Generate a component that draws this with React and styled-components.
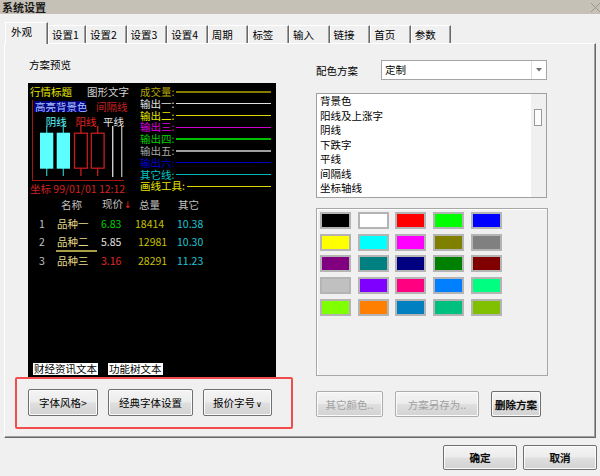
import React from 'react';
import styled, { createGlobalStyle } from 'styled-components';

const GlobalStyle = createGlobalStyle`
  html, body {
    margin: 0;
    padding: 0;
    background: #f0f0f0;
  }
  body {
    font-family: "Noto Sans CJK SC", "Liberation Sans", sans-serif;
    font-size: 10.5px;
    color: #000;
  }
`;

const Window = styled.div`
  width: 600px;
  height: 476px;
  display: flex;
  flex-direction: column;
  background: #f0f0f0;
  overflow: hidden;
`;

const TitleBar = styled.div`
  height: 14px;
  background: #c6c1b7;
  display: flex;
  align-items: center;
  justify-content: space-between;
  padding: 0 0 0 2px;
  font-size: 11px;
  font-weight: bold;
  color: #1a1a1a;
`;

const TabStrip = styled.div`
  display: flex;
  align-items: flex-end;
  height: 21px;
  margin: 8px 0 0 5px;
  position: relative;
  z-index: 1;
`;

const Tab = styled.div`
  box-sizing: border-box;
  flex: none;
  width: ${(p) => p.$w}px;
  height: ${(p) => (p.$active ? 22 : 18)}px;
  margin-bottom: ${(p) => (p.$active ? -1 : 0)}px;
  padding-left: ${(p) => (p.$active ? 5 : 3)}px;
  line-height: ${(p) => (p.$active ? 18 : 17)}px;
  background: #f0f0f0;
  border-top: 1px solid #fff;
  border-left: 1px solid #fff;
  border-right: 1px solid #696969;
  box-shadow: inset -1px 0 0 #a0a0a0;
  white-space: nowrap;
`;

const Panel = styled.div`
  box-sizing: border-box;
  width: 592px;
  height: 395px;
  margin: 0 4px;
  border: 1px solid;
  border-color: #fff #696969 #696969 #fff;
  box-shadow: inset -1px -1px 0 #a0a0a0;
  display: flex;
  padding-left: 10px;
`;

const LeftCol = styled.div`
  width: 278px;
  display: flex;
  flex-direction: column;
`;

const SectionLabel = styled.div`
  margin: 15px 0 0 14px;
  height: 12px;
  line-height: 12px;
`;

const Preview = styled.div`
  box-sizing: border-box;
  width: 248px;
  height: 294px;
  margin: 12px 0 0 13px;
  padding-top: 3px;
  background: #000;
  display: flex;
  flex-direction: column;
  line-height: 12px;
`;

const PreviewTop = styled.div`
  display: flex;
  height: 109px;
`;

const ChartCol = styled.div`
  box-sizing: border-box;
  width: 112px;
  padding-left: 2px;
`;

const Colored = styled.span`
  color: ${(p) => p.$c};
  display: inline-block;
  width: ${(p) => (p.$w ? `${p.$w}px` : 'auto')};
  margin-left: ${(p) => p.$ml || 0}px;
  white-space: nowrap;
`;

const ChartTitleRow = styled.div`
  display: flex;
  height: 12px;
`;

const Frame = styled.div`
  box-sizing: border-box;
  width: 92px;
  height: 81px;
  margin: 2px 0 0 2px;
  border-left: 1px solid #a41616;
  border-bottom: 1px solid #a41616;
  display: flex;
  flex-direction: column;
`;

const FrameRowA = styled.div`
  display: flex;
  height: 11px;
  margin-top: 1px;
  line-height: 11px;
`;

const HiBg = styled.span`
  box-sizing: border-box;
  width: 52px;
  margin-left: 1px;
  padding-left: 1px;
  background: #000080;
  color: #a8c0ff;
  white-space: nowrap;
`;

const FrameRowB = styled.div`
  display: flex;
  height: 10px;
  margin-top: 4px;
  padding-left: 12.7px;
  line-height: 12px;
`;

const Coord = styled.div`
  margin-top: 2px;
  height: 12px;
  color: #d42020;
  white-space: nowrap;
`;

const Legend = styled.div`
  flex: 1;
  padding-right: 5px;
  display: flex;
  flex-direction: column;
`;

const LegendRow = styled.div`
  display: flex;
  align-items: center;
  height: 11.8px;
  line-height: 11.8px;
  color: ${(p) => p.$c};
  white-space: nowrap;
`;

const LegendLine = styled.div`
  flex: 1;
  height: 1.5px;
  margin-left: 2px;
  background: ${(p) => p.$c};
`;

const Table = styled.div`
  display: grid;
  grid-template-columns: 18px 44px 34px 42px 1fr;
  grid-auto-rows: 18.8px;
  align-items: center;
  padding-left: 11px;
  margin-top: 0.5px;
`;

const Cell = styled.div`
  position: relative;
  color: ${(p) => p.$c || '#c0c0c0'};
  padding-left: ${(p) => p.$pl || 0}px;
  white-space: nowrap;

  ${(p) =>
    p.$underline &&
    `
    &::after {
      content: '';
      position: absolute;
      left: -1px;
      top: 14px;
      width: 41px;
      height: 2px;
      background: #a89c48;
    }
  `}
`;

const Arrow = styled.span`
  color: #ff2020;
  font-family: "DejaVu Sans", sans-serif;
  font-size: 9px;
  margin-left: 1px;
`;

const TextTags = styled.div`
  margin-top: auto;
  padding: 0 0 2px 5px;
  display: flex;
  gap: 10px;
`;

const TextTag = styled.span`
  background: #fff;
  color: #000;
  height: 12px;
  line-height: 12px;
  padding: 0 1px;
`;

const RedBox = styled.div`
  box-sizing: border-box;
  width: 278px;
  height: 52px;
  border: 2px solid #f24c4c;
  border-radius: 2px;
  display: flex;
  gap: 10px;
  padding: 10px 0 0 11px;
`;

const Button = styled.button`
  box-sizing: border-box;
  flex: none;
  width: ${(p) => p.$w}px;
  height: ${(p) => p.$h || 26}px;
  padding: 0;
  font: inherit;
  color: ${(p) => (p.disabled ? '#a0a0a0' : '#000')};
  -webkit-text-stroke: ${(p) => (p.$strong ? '0.35px #000' : '0')};
  border: 1px solid ${(p) => (p.disabled ? '#adadad' : '#707070')};
  border-radius: 2px;
  background: linear-gradient(#f4f4f4, #ececec 48%, #dfdfdf 52%, #d2d2d2);
  box-shadow: inset 0 0 0 1px #fbfbfb;
  white-space: nowrap;
`;

const SmallV = styled.span`
  font-family: "DejaVu Sans", sans-serif;
  font-size: 8px;
  margin-left: 1px;
`;

const RightCol = styled.div`
  width: 235px;
  margin-left: 23px;
  display: flex;
  flex-direction: column;
`;

const SelectRow = styled.div`
  display: flex;
  align-items: center;
  height: 20px;
  margin-top: 16px;
`;

const FieldLabel = styled.div`
  width: 65px;
`;

const Select = styled.div`
  box-sizing: border-box;
  width: 166px;
  height: 20px;
  border: 1px solid #a5a5a5;
  background: #fff;
  display: flex;
`;

const SelectText = styled.div`
  flex: 1;
  padding-left: 3px;
  line-height: 18px;
`;

const SelectButton = styled.div`
  width: 14px;
  border-left: 1px solid #dcdcdc;
  display: flex;
  align-items: center;
  justify-content: center;
`;

const ListBox = styled.div`
  box-sizing: border-box;
  width: 231px;
  height: 105px;
  margin-top: 13px;
  border: 1px solid #a0a0a0;
  background: #fff;
  display: flex;
`;

const ListItems = styled.div`
  flex: 1;
  padding-left: 3px;
  line-height: 14.5px;
`;

const ScrollTrack = styled.div`
  width: 15px;
  background: #f0f0f0;
  display: flex;
  flex-direction: column;
  align-items: center;
`;

const Thumb = styled.div`
  box-sizing: border-box;
  width: 8px;
  height: 17px;
  margin: 15px 1px 0 0;
  border: 1px solid #9a9a9a;
  background: #fbfbfb;
`;

const ColorPanel = styled.div`
  box-sizing: border-box;
  width: 232px;
  height: 168px;
  margin-top: 10px;
  padding: 3px 0 0 3px;
  border: 1px solid #a8a8a8;
  box-shadow: inset 1px 1px 0 #fff;
  display: grid;
  grid-template-columns: repeat(5, 31px);
  grid-auto-rows: 17px;
  column-gap: 6.7px;
  row-gap: 4.7px;
  align-content: start;
`;

const Swatch = styled.div`
  box-sizing: border-box;
  border: 2px solid #b4b4b4;
  background: ${(p) => p.$c};
`;

const ButtonRow = styled.div`
  display: flex;
  gap: 12px;
  margin-top: 15px;
`;

const Footer = styled.div`
  display: flex;
  justify-content: flex-end;
  gap: 6px;
  padding: 7px 3px 0 0;
`;

const tabs = ['外观', '设置1', '设置2', '设置3', '设置4', '周期', '标签', '输入', '链接', '首页', '参数'];

const legend = [
  ['成交量', '#b4a400', '#857c00'],
  ['输出一', '#e0e0e0', '#e0e0e0'],
  ['输出二', '#e6e600', '#d8d800'],
  ['输出三', '#e000e0', '#d000d0'],
  ['输出四', '#00d000', '#00c000'],
  ['输出五', '#a8a8a8', '#a0a0a0'],
  ['输出六', '#0000d0', '#0000c0'],
  ['其它线', '#00c8c8', '#00b8b8'],
  ['画线工具', '#e6e600', '#d8d800'],
];

const quotes = [
  { n: '1', name: '品种一', price: '6.83', pc: '#00d000', vol: '18414', vp: 0, other: '10.38' },
  { n: '2', name: '品种二', price: '5.85', pc: '#e0e0e0', vol: '12981', vp: 3, other: '10.30', sel: true },
  { n: '3', name: '品种三', price: '3.16', pc: '#e02828', vol: '28291', vp: 3, other: '11.23' },
];

const listItems = ['背景色', '阳线及上涨字', '阴线', '下跌字', '平线', '间隔线', '坐标轴线'];

const swatches = [
  '#000000', '#ffffff', '#ff0000', '#00ff00', '#0000ff',
  '#ffff00', '#00ffff', '#ff00ff', '#808000', '#808080',
  '#800080', '#008080', '#000080', '#008000', '#800000',
  '#c0c0c0', '#8000ff', '#ff0080', '#0080ff', '#00ff80',
  '#80ff00', '#ff8000', '#0080c0', '#00c080', '#80c000',
];

const Candles = () => (
  <svg width="91" height="54" viewBox="0 0 91 54" style={{ display: 'block' }}>
    <g stroke="#2fb3b3" strokeWidth="1.3">
      <line x1="13.7" y1="0" x2="13.7" y2="50" />
      <line x1="30.3" y1="0" x2="30.3" y2="50" />
    </g>
    <rect x="7" y="6.7" width="13.3" height="36" fill="#5cffff" />
    <rect x="23.7" y="6.7" width="13.3" height="36" fill="#5cffff" />
    <g stroke="#c81c1c" strokeWidth="1.3" fill="#000">
      <line x1="47.9" y1="0" x2="47.9" y2="50" />
      <line x1="64.7" y1="0" x2="64.7" y2="50" />
      <rect x="41.5" y="7.2" width="12.8" height="35" />
      <rect x="58.3" y="7.2" width="12.8" height="35" />
    </g>
    <line x1="79.7" y1="0" x2="79.7" y2="51" stroke="#cfcfcf" strokeWidth="1.4" />
    <line x1="88.7" y1="0" x2="88.7" y2="51" stroke="#a8a8a8" strokeWidth="1.4" />
  </svg>
);

const CloseIcon = () => (
  <svg width="11" height="11" viewBox="0 0 11 11" style={{ marginRight: -1 }}>
    <path d="M1 1 L10 10 M10 1 L1 10" stroke="#9c9890" strokeWidth="1" fill="none" />
  </svg>
);

const App = () => (
  <Window>
    <GlobalStyle />
    <TitleBar>
      <span>系统设置</span>
      <CloseIcon />
    </TitleBar>

    <TabStrip>
      {tabs.map((t, i) => (
        <Tab key={t} $active={i === 0} $w={i === 0 ? 43 : i === 1 ? 38 : 40.6}>
          {t}
        </Tab>
      ))}
    </TabStrip>

    <Panel>
      <LeftCol>
        <SectionLabel>方案预览</SectionLabel>
        <Preview>
          <PreviewTop>
            <ChartCol>
              <ChartTitleRow>
                <Colored $c="#e6e600" $w={57}>行情标题</Colored>
                <Colored $c="#d4d4d4">图形文字</Colored>
              </ChartTitleRow>
              <Frame>
                <FrameRowA>
                  <HiBg>高亮背景色</HiBg>
                  <Colored $c="#c42020" $ml={10}>间隔线</Colored>
                </FrameRowA>
                <FrameRowB>
                  <Colored $c="#5cffff" $w={32.3}>阴线</Colored>
                  <Colored $c="#e02424" $w={30}>阳线</Colored>
                  <Colored $c="#e4e4e4">平线</Colored>
                </FrameRowB>
                <Candles />
              </Frame>
              <Coord>坐标 99/01/01 12:12</Coord>
            </ChartCol>
            <Legend>
              {legend.map(([label, c, lc]) => (
                <LegendRow key={label} $c={c}>
                  {label}:
                  <LegendLine $c={lc} />
                </LegendRow>
              ))}
            </Legend>
          </PreviewTop>

          <Table>
            <Cell />
            <Cell $pl={4}>名称</Cell>
            <Cell $pl={1}>
              现价<Arrow>↓</Arrow>
            </Cell>
            <Cell $pl={4}>总量</Cell>
            <Cell $pl={1}>其它</Cell>
            {quotes.map((q) => (
              <React.Fragment key={q.n}>
                <Cell>{q.n}</Cell>
                <Cell $c="#e6dc8c" $underline={q.sel}>{q.name}</Cell>
                <Cell $c={q.pc}>{q.price}</Cell>
                <Cell $c="#c8c000" $pl={q.vp}>{q.vol}</Cell>
                <Cell $c="#20c4d4">{q.other}</Cell>
              </React.Fragment>
            ))}
          </Table>

          <TextTags>
            <TextTag>财经资讯文本</TextTag>
            <TextTag>功能树文本</TextTag>
          </TextTags>
        </Preview>

        <RedBox>
          <Button $w={70} $h={27}>字体风格&gt;</Button>
          <Button $w={85} $h={27}>经典字体设置</Button>
          <Button $w={69} $h={27}>
            报价字号<SmallV>∨</SmallV>
          </Button>
        </RedBox>
      </LeftCol>

      <RightCol>
        <SelectRow>
          <FieldLabel>配色方案</FieldLabel>
          <Select>
            <SelectText>定制</SelectText>
            <SelectButton>
              <svg width="6" height="4" viewBox="0 0 6 4">
                <path d="M0 0 H6 L3 3.5 Z" fill="#707070" />
              </svg>
            </SelectButton>
          </Select>
        </SelectRow>

        <ListBox>
          <ListItems>
            {listItems.map((it) => (
              <div key={it}>{it}</div>
            ))}
          </ListItems>
          <ScrollTrack>
            <Thumb />
          </ScrollTrack>
        </ListBox>

        <ColorPanel>
          {swatches.map((c, i) => (
            <Swatch key={i} $c={c} />
          ))}
        </ColorPanel>

        <ButtonRow>
          <Button $w={67} disabled>其它颜色..</Button>
          <Button $w={84} disabled>方案另存为..</Button>
          <Button $w={50} $strong>删除方案</Button>
        </ButtonRow>
      </RightCol>
    </Panel>

    <Footer>
      <Button $w={74} $h={25} $strong>确定</Button>
      <Button $w={74} $h={25} $strong>取消</Button>
    </Footer>
  </Window>
);

export default App;
